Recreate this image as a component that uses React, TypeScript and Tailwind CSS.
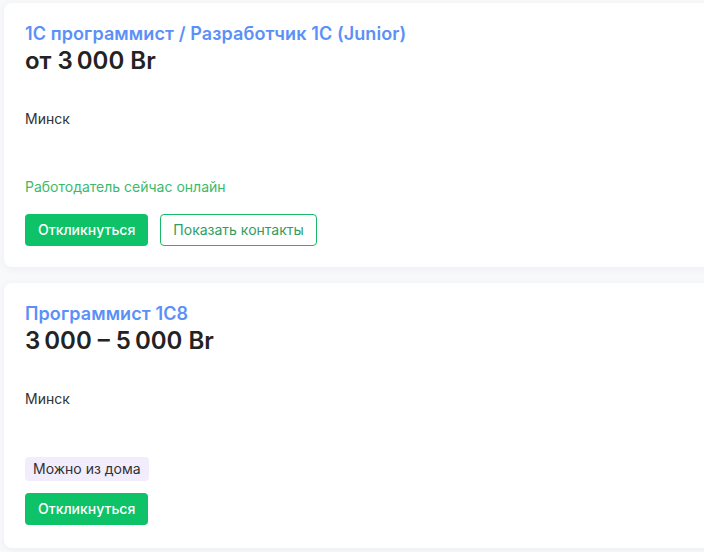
import React from 'react'

interface Vacancy {
  title: string
  salary: string
  city: string
  online?: boolean
  remote?: boolean
  contacts?: boolean
}

const vacancies: Vacancy[] = [
  {
    title: '1С программист / Разработчик 1С (Junior)',
    salary: 'от 3\u202F000 Br',
    city: 'Минск',
    online: true,
    contacts: true
  },
  {
    title: 'Программист 1С8',
    salary: '3\u202F000 – 5\u202F000 Br',
    city: 'Минск',
    remote: true
  }
]

const VacancyCard: React.FC<{ v: Vacancy }> = ({ v }) => (
  <div
    className={`w-[720px] bg-white rounded-lg shadow-[0_2px_10px_rgba(20,30,60,0.05)] pt-5 pl-[21px] ${
      v.online ? 'pb-[21px]' : 'pb-[23px]'
    }`}
  >
    <div className="text-[18px] leading-[22px] font-semibold tracking-[0.1px] text-[#5b90f7]">{v.title}</div>
    <div className="text-[24px] leading-8 font-semibold text-[#232323]">{v.salary}</div>
    <div className="mt-8 text-sm leading-5 text-[#303233]">{v.city}</div>
    {v.online && (
      <div className="mt-12 text-sm leading-5 text-[#3cba6c]">Работодатель сейчас онлайн</div>
    )}
    {v.remote && (
      <div className="mt-12 flex">
        <span className="h-6 px-2 rounded bg-[#f1edfd] text-sm leading-6 text-[#303233]">Можно из дома</span>
      </div>
    )}
    <div className={`flex gap-3 ${v.online ? 'mt-[17px]' : 'mt-3'}`}>
      <button className="h-8 px-[13px] rounded bg-[#0dc267] text-white text-sm font-medium">
        Откликнуться
      </button>
      {v.contacts && (
        <button className="h-8 px-3 rounded border border-[#17b866] text-[#2e9e63] text-sm bg-white">
          Показать контакты
        </button>
      )}
    </div>
  </div>
)

export default function App() {
  return (
    <div
      className="w-[704px] h-[552px] overflow-hidden bg-[#f8f9fb] pl-1 pt-[3px] flex flex-col gap-4"
      style={{ fontFamily: 'Inter, "Noto Sans", sans-serif' }}
    >
      {vacancies.map((v, i) => (
        <VacancyCard key={i} v={v} />
      ))}
    </div>
  )
}
